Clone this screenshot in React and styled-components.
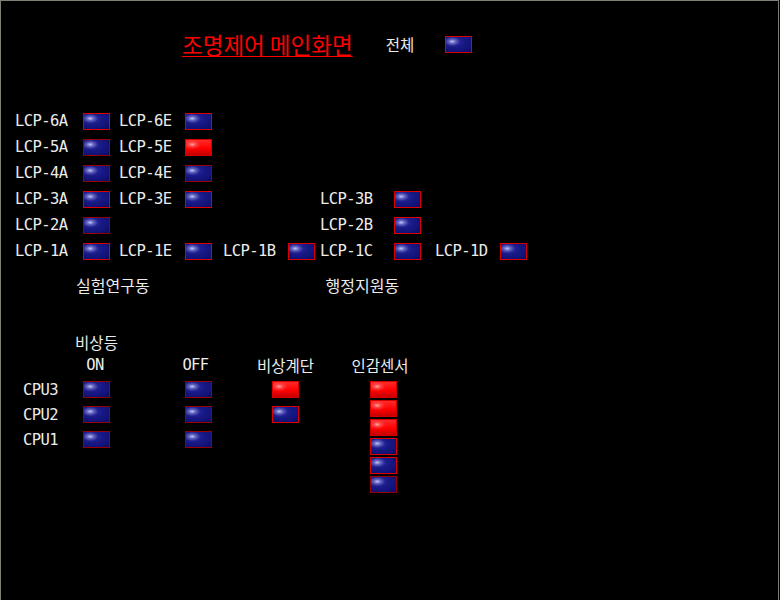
import React from 'react';
import styled, { createGlobalStyle } from 'styled-components';

const KO = `"Noto Sans CJK KR", "Noto Sans", sans-serif`;
const LATIN = `"DejaVu Sans Mono", "Liberation Mono", monospace`;

const Global = createGlobalStyle`
  html, body { margin: 0; padding: 0; background: #000; }
  body { width: 780px; height: 600px; overflow: hidden; }
`;

const Screen = styled.div`
  box-sizing: border-box;
  width: 779px;
  height: 600px;
  border-left: 1px solid #7f7f76;
  border-top: 1px solid #7f7f76;
  border-right: 1px solid #7f7f76;
  background: #000;
  color: #ececec;
  display: flex;
  flex-direction: column;
`;

const Header = styled.div`
  display: flex;
  align-items: center;
  height: 24px;
  margin-top: 31px;
  padding-left: 181px;
`;

const Title = styled.h1`
  margin: 0;
  font-family: ${KO};
  font-weight: 400;
  font-size: 22.5px;
  line-height: 24px;
  color: #ff0000;
  text-decoration: underline;
  text-decoration-thickness: 1px;
  text-underline-offset: 2px;
`;

const AllLabel = styled.span`
  font-family: ${KO};
  font-size: 15.5px;
  line-height: 24px;
  margin-left: 33px;
  margin-right: 31px;
`;

const blueFill = `
  radial-gradient(ellipse 50% 48% at 25% 30%, rgba(225,225,255,0.85) 0%, rgba(150,150,235,0.55) 30%, rgba(60,60,180,0.15) 65%, rgba(50,50,170,0) 100%),
  radial-gradient(ellipse 95% 95% at 40% 35%, #1e1e92 0%, #15157e 55%, #0a0a5c 100%)
`;
const redFill = `
  radial-gradient(ellipse 50% 48% at 25% 30%, rgba(255,200,200,0.8) 0%, rgba(255,110,110,0.5) 30%, rgba(255,40,40,0.1) 65%, rgba(255,0,0,0) 100%),
  linear-gradient(180deg, #ff2a2a 0%, #ff0000 55%, #c40000 100%)
`;

const Lamp = styled.div`
  box-sizing: border-box;
  width: 27px;
  height: 17px;
  border: 1px solid ${(p) => (p.$on ? '#d40000' : p.$dim ? '#960000' : '#dc0000')};
  background: ${(p) => (p.$on ? redFill : blueFill)};
  grid-column: ${(p) => p.$col || 'auto'};
  grid-row: ${(p) => p.$row || 'auto'};
`;

const LcpGrid = styled.div`
  display: grid;
  grid-template-columns: 68px 36px 66px 38px 65px 32px 74px 41px 65px 27px;
  grid-auto-rows: 26px;
  align-items: center;
  margin: 52px 0 0 14px;
`;

const Tag = styled.span`
  font-family: ${LATIN};
  font-size: 15.5px;
  letter-spacing: -0.6px;
  line-height: 20px;
  white-space: nowrap;
  grid-column: ${(p) => p.$col};
  grid-row: ${(p) => p.$row};
`;

const BuildingRow = styled.div`
  display: flex;
  gap: 176px;
  height: 20px;
  margin-top: 11px;
  padding-left: 75px;
`;

const Building = styled.span`
  font-family: ${KO};
  font-size: 16px;
  line-height: 20px;
`;

const CtrlGrid = styled.div`
  display: grid;
  grid-template-columns: 60px 27px 75px 27px 60px 27px 71px 27px;
  grid-template-rows: 22px 24px 25px 25px 25px;
  align-items: center;
  margin: 36px 0 0 22px;
`;

const HeadCell = styled.div`
  display: flex;
  justify-content: center;
  white-space: nowrap;
  grid-column: ${(p) => p.$col};
  grid-row: ${(p) => p.$row};
  font-family: ${(p) => (p.$latin ? LATIN : KO)};
  font-size: 15.5px;
  letter-spacing: ${(p) => (p.$latin ? '-0.6px' : '0')};
  line-height: 20px;
  margin-left: ${(p) => p.$dx || 0}px;
`;

const SensorStack = styled.div`
  grid-column: 8;
  grid-row: 3 / span 3;
  align-self: start;
  margin-top: 4px;
  display: flex;
  flex-direction: column;
  gap: 2px;
`;

const lcp = [
  ['LCP-6A', 1, 1, 0, 0], ['LCP-6E', 3, 1, 0, 0],
  ['LCP-5A', 1, 2, 0, 1], ['LCP-5E', 3, 2, 1, 0],
  ['LCP-4A', 1, 3, 0, 1], ['LCP-4E', 3, 3, 0, 1],
  ['LCP-3A', 1, 4, 0, 0], ['LCP-3E', 3, 4, 0, 0], ['LCP-3B', 7, 4, 0, 0],
  ['LCP-2A', 1, 5, 0, 1], ['LCP-2B', 7, 5, 0, 0],
  ['LCP-1A', 1, 6, 0, 0], ['LCP-1E', 3, 6, 0, 0], ['LCP-1B', 5, 6, 0, 0],
  ['LCP-1C', 7, 6, 0, 0], ['LCP-1D', 9, 6, 0, 0],
];

const sensors = [
  { on: true }, { on: true }, { on: true },
  { on: false }, { on: false }, { on: false, dim: true },
];

export default function App() {
  return (
    <>
      <Global />
      <Screen>
        <Header>
          <Title>조명제어 메인화면</Title>
          <AllLabel>전체</AllLabel>
          <Lamp />
        </Header>

        <LcpGrid>
          {lcp.map(([name, col, row, on, dim]) => (
            <React.Fragment key={name}>
              <Tag $col={col} $row={row}>{name}</Tag>
              <Lamp $col={col + 1} $row={row} $on={!!on} $dim={!!dim} />
            </React.Fragment>
          ))}
        </LcpGrid>

        <BuildingRow>
          <Building>실험연구동</Building>
          <Building>행정지원동</Building>
        </BuildingRow>

        <CtrlGrid>
          <HeadCell $col={2} $row={1}>비상등</HeadCell>
          <HeadCell $col={2} $row={2} $latin $dx={-3}>ON</HeadCell>
          <HeadCell $col={4} $row={2} $latin $dx={-6}>OFF</HeadCell>
          <HeadCell $col={6} $row={2}>비상계단</HeadCell>
          <HeadCell $col={8} $row={2} $dx={-7}>인감센서</HeadCell>

          {['CPU3', 'CPU2', 'CPU1'].map((cpu, i) => (
            <React.Fragment key={cpu}>
              <Tag $col={1} $row={i + 3}>{cpu}</Tag>
              <Lamp $col={2} $row={i + 3} $dim />
              <Lamp $col={4} $row={i + 3} $dim />
            </React.Fragment>
          ))}
          <Lamp $col={6} $row={3} $on />
          <Lamp $col={6} $row={4} />

          <SensorStack>
            {sensors.map((s, i) => (
              <Lamp key={i} $on={s.on} $dim={s.dim} />
            ))}
          </SensorStack>
        </CtrlGrid>
      </Screen>
    </>
  );
}
